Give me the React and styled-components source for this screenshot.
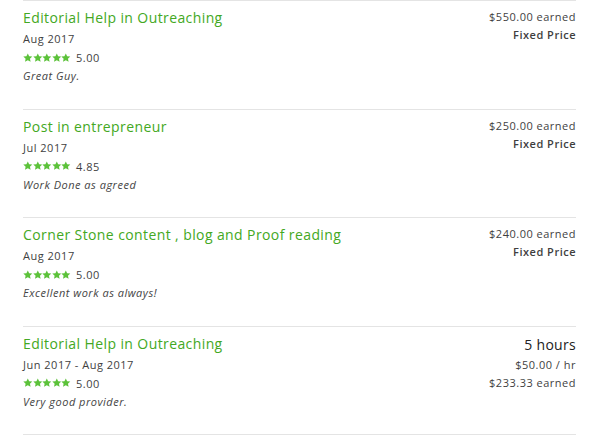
import React from "react";
import styled, { createGlobalStyle } from "styled-components";

const GlobalStyle = createGlobalStyle`
  body {
    margin: 0;
    background: #fff;
    font-family: "Open Sans", "Liberation Sans", sans-serif;
  }
`;

const List = styled.div`
  margin-left: 23px;
  width: 553px;
  border-bottom: 1px solid #e4e4e4;
`;

const Row = styled.div`
  display: flex;
  justify-content: space-between;
  border-top: 1px solid #e4e4e4;
  height: 108.5px;
  box-sizing: border-box;
  padding-top: 7px;
`;

const Left = styled.div`
  display: flex;
  flex-direction: column;
`;

const Title = styled.div`
  color: #43a823;
  font-size: 14px;
  font-weight: 500;
  line-height: 20px;
  letter-spacing: 0.4px;
  margin-bottom: 1px;
`;

const DateText = styled.div`
  color: #3f3f3f;
  font-size: 11px;
  line-height: 19px;
  letter-spacing: 0.5px;
`;

const Rating = styled.div`
  display: flex;
  align-items: center;
  gap: 5px;
  color: #3f3f3f;
  font-size: 11px;
  line-height: 19px;
  letter-spacing: 0.5px;
`;

const Stars = styled.span`
  display: flex;
`;

const Comment = styled.div`
  color: #444;
  font-size: 11px;
  font-style: italic;
  line-height: 17px;
  letter-spacing: 0.5px;
`;

const Right = styled.div`
  display: flex;
  flex-direction: column;
  align-items: flex-end;
`;

const Amount = styled.div`
  font-weight: ${(p) => (p.$bold ? 600 : 400)};
  font-size: ${(p) => (p.$big ? "14px" : "11px")};
  line-height: ${(p) => (p.$big ? "21px" : "18px")};
  letter-spacing: ${(p) => (p.$big ? "0.3px" : "0.5px")};
  color: ${(p) => (p.$big ? "#222" : "#3f3f3f")};
  margin-bottom: ${(p) => (p.$big ? "1px" : "0")};
`;

const Star = () => (
  <svg width="9.6" height="9.6" viewBox="0 0 24 24">
    <path
      fill="#5cc23a"
      d="M12 1l3.4 7.1 7.8.9-5.8 5.3 1.6 7.7L12 18.1l-7 3.9 1.6-7.7L.8 9l7.8-.9z"
    />
  </svg>
);

const items = [
  {
    title: "Editorial Help in Outreaching",
    date: "Aug 2017",
    score: "5.00",
    comment: "Great Guy.",
    right: [{ text: "$550.00 earned" }, { text: "Fixed Price", bold: true }],
  },
  {
    title: "Post in entrepreneur",
    date: "Jul 2017",
    score: "4.85",
    comment: "Work Done as agreed",
    right: [{ text: "$250.00 earned" }, { text: "Fixed Price", bold: true }],
  },
  {
    title: "Corner Stone content , blog and Proof reading",
    date: "Aug 2017",
    score: "5.00",
    comment: "Excellent work as always!",
    right: [{ text: "$240.00 earned" }, { text: "Fixed Price", bold: true }],
  },
  {
    title: "Editorial Help in Outreaching",
    date: "Jun 2017 - Aug 2017",
    score: "5.00",
    comment: "Very good provider.",
    right: [
      { text: "5 hours", big: true },
      { text: "$50.00 / hr" },
      { text: "$233.33 earned" },
    ],
  },
];

export default function App() {
  return (
    <>
      <GlobalStyle />
      <List>
        {items.map((it, i) => (
          <Row key={i}>
            <Left>
              <Title>{it.title}</Title>
              <DateText>{it.date}</DateText>
              <Rating>
                <Stars>
                  {[0, 1, 2, 3, 4].map((s) => (
                    <Star key={s} />
                  ))}
                </Stars>
                {it.score}
              </Rating>
              <Comment>{it.comment}</Comment>
            </Left>
            <Right>
              {it.right.map((r, j) => (
                <Amount key={j} $bold={r.bold} $big={r.big}>
                  {r.text}
                </Amount>
              ))}
            </Right>
          </Row>
        ))}
      </List>
    </>
  );
}
